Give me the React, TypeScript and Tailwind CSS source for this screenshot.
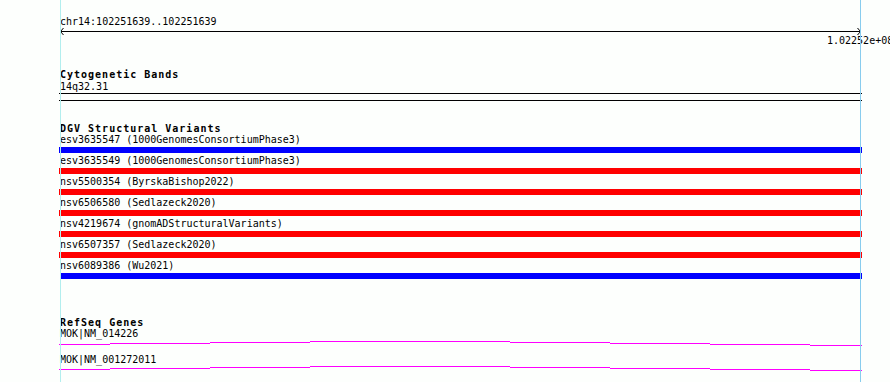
import React from "react";

const mono = { fontFamily: '"DejaVu Sans Mono", "Liberation Mono", monospace' };

const variants: { label: string; color: string; short?: boolean }[] = [
  { label: "esv3635547 (1000GenomesConsortiumPhase3)", color: "bg-[#0000ff]" },
  { label: "esv3635549 (1000GenomesConsortiumPhase3)", color: "bg-[#ff0000]" },
  { label: "nsv5500354 (ByrskaBishop2022)", color: "bg-[#ff0000]" },
  { label: "nsv6506580 (Sedlazeck2020)", color: "bg-[#ff0000]" },
  { label: "nsv4219674 (gnomADStructuralVariants)", color: "bg-[#ff0000]" },
  { label: "nsv6507357 (Sedlazeck2020)", color: "bg-[#ff0000]" },
  { label: "nsv6089386 (Wu2021)", color: "bg-[#0000ff]", short: true },
];

function GeneLine({ base, height }: { base: number; height: number }) {
  // segments: [x0, x1, yOffset]
  const segs: [number, number, number][] = [
    [0, 51, 3],
    [51, 151, 2],
    [151, 251, 1],
    [251, 351, 0],
    [351, 451, 0],
    [451, 551, 1],
    [551, 651, 2],
    [651, 751, 3],
    [751, 803, 4],
  ];
  return (
    <svg width={803} height={height} className="block" shapeRendering="crispEdges">
      {segs.map(([a, b, o], i) => (
        <rect key={i} x={a} y={base + o} width={b - a} height={1} fill="#ff00ff" />
      ))}
    </svg>
  );
}

export default function App() {
  return (
    <div className="relative w-[890px] h-[382px] overflow-hidden bg-[#fdfffd] text-black" style={mono}>
      <div className="flex flex-col pl-[59px] w-[862px] text-[10px] leading-[11px]">
        <div className="mt-[16px] h-[11px] pl-[1px] whitespace-nowrap">chr14:102251639..102251639</div>
        <svg width={803} height={8} className="block" shapeRendering="crispEdges">
          <rect x={1} y={4} width={801} height={1} fill="#000" />
          <polyline points="4.5,1 1.5,4.5 4.5,8" fill="none" stroke="#000" strokeWidth={1} shapeRendering="auto" />
          <polyline points="798.5,1 801.5,4.5 798.5,8" fill="none" stroke="#000" strokeWidth={1} shapeRendering="auto" />
        </svg>
        <div className="h-[11px] ml-[768px] whitespace-nowrap">1.02252e+08</div>

        <div className="mt-[23px] h-[11px] pl-[1px] font-bold tracking-[1px] whitespace-nowrap">Cytogenetic Bands</div>
        <div className="h-[11px] mt-[1px] pl-[1px] whitespace-nowrap">14q32.31</div>
        <div className="mt-[1px] h-[1px] w-[803px] bg-black" />
        <div className="mt-[6px] h-[1px] w-[803px] bg-black" />

        <div className="mt-[22px] h-[11px] pl-[1px] font-bold tracking-[1px] whitespace-nowrap">DGV Structural Variants</div>
        <div className="flex flex-col">
          {variants.map((v, i) => (
            <div key={i} className="flex flex-col">
              <div className="h-[11px] pl-[1px] whitespace-nowrap">{v.label}</div>
              <div className={`mt-[2px] mb-[2px] h-[6px] ${v.color} ${v.short ? "w-[802px] ml-[1px]" : "w-[803px]"}`} />
            </div>
          ))}
        </div>

        <div className="mt-[36px] h-[11px] pl-[1px] font-bold tracking-[1px] whitespace-nowrap">RefSeq Genes</div>
        <div className="h-[11px] pl-[1px] whitespace-nowrap">MOK|NM_014226</div>
        <GeneLine base={2} height={15} />
        <div className="h-[11px] pl-[1px] whitespace-nowrap">MOK|NM_001272011</div>
        <GeneLine base={1} height={12} />
      </div>

      <div className="absolute top-0 left-[60px] w-[1px] h-full bg-[#b2eeee]" />
      <div className="absolute top-0 left-[860px] w-[1px] h-full bg-[#88ccee]" />
    </div>
  );
}
